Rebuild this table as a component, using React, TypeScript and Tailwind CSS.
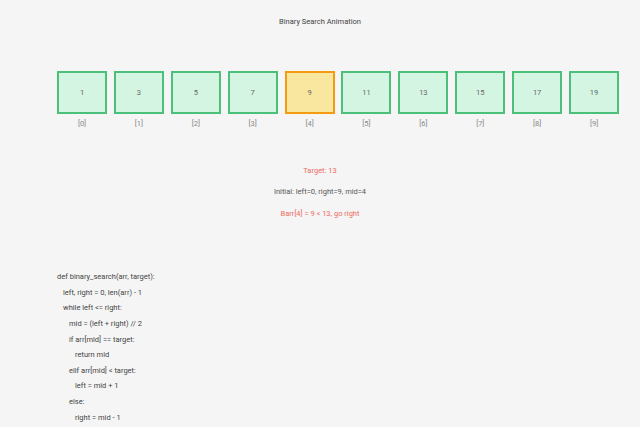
import React from "react";

const arr = [1, 3, 5, 7, 9, 11, 13, 15, 17, 19];
const code: [number, string][] = [
  [0, "def binary_search(arr, target):"],
  [1, "left, right = 0, len(arr) - 1"],
  [1, "while left <= right:"],
  [2, "mid = (left + right) // 2"],
  [2, "if arr[mid] == target:"],
  [3, "return mid"],
  [2, "elif arr[mid] < target:"],
  [3, "left = mid + 1"],
  [2, "else:"],
  [3, "right = mid - 1"],
];

const indent = ["pl-0", "pl-[6px]", "pl-[12px]", "pl-[18px]"];

export default function App() {
  return (
    <div
      className="w-[640px] h-[427px] overflow-hidden bg-[#f5f5f5] text-[7.5px] leading-[10px] text-[#444]"
      style={{ fontFamily: "Roboto, 'Noto Sans', sans-serif" }}
    >
      <div className="pt-[17px] text-center">Binary Search Animation</div>
      <div className="flex gap-[6.9px] pl-[57px] pt-[44px]">
        {arr.map((v, i) => (
          <div key={i} className="flex flex-col items-center w-[50px]">
            <div
              className={
                i === 4
                  ? "w-[50px] h-[43px] flex items-center justify-center border-2 border-[#f39c12] bg-[#f9e79f] text-[#666]"
                  : "w-[50px] h-[43px] flex items-center justify-center border-2 border-[#4cbf7a] bg-[#d5f5e3] text-[#666]"
              }
            >
              {v}
            </div>
            <div className="mt-[5px] text-[#888]">[{i}]</div>
          </div>
        ))}
      </div>
      <div className="mt-[37px] text-center text-[#ec6a5e]">Target: 13</div>
      <div className="mt-[11px] text-center text-[#555]">Initial: left=0, right=9, mid=4</div>
      <div className="mt-[12px] text-center text-[#ec6a5e]">
        Barr[4] = 9 &lt; 13, go right
      </div>
      <div className="mt-[53px] pl-[57px] flex flex-col gap-[5.65px]">
        {code.map(([lvl, t], i) => (
          <div key={i} className={indent[lvl] + " whitespace-pre"}>
            {t}
          </div>
        ))}
      </div>
    </div>
  );
}
